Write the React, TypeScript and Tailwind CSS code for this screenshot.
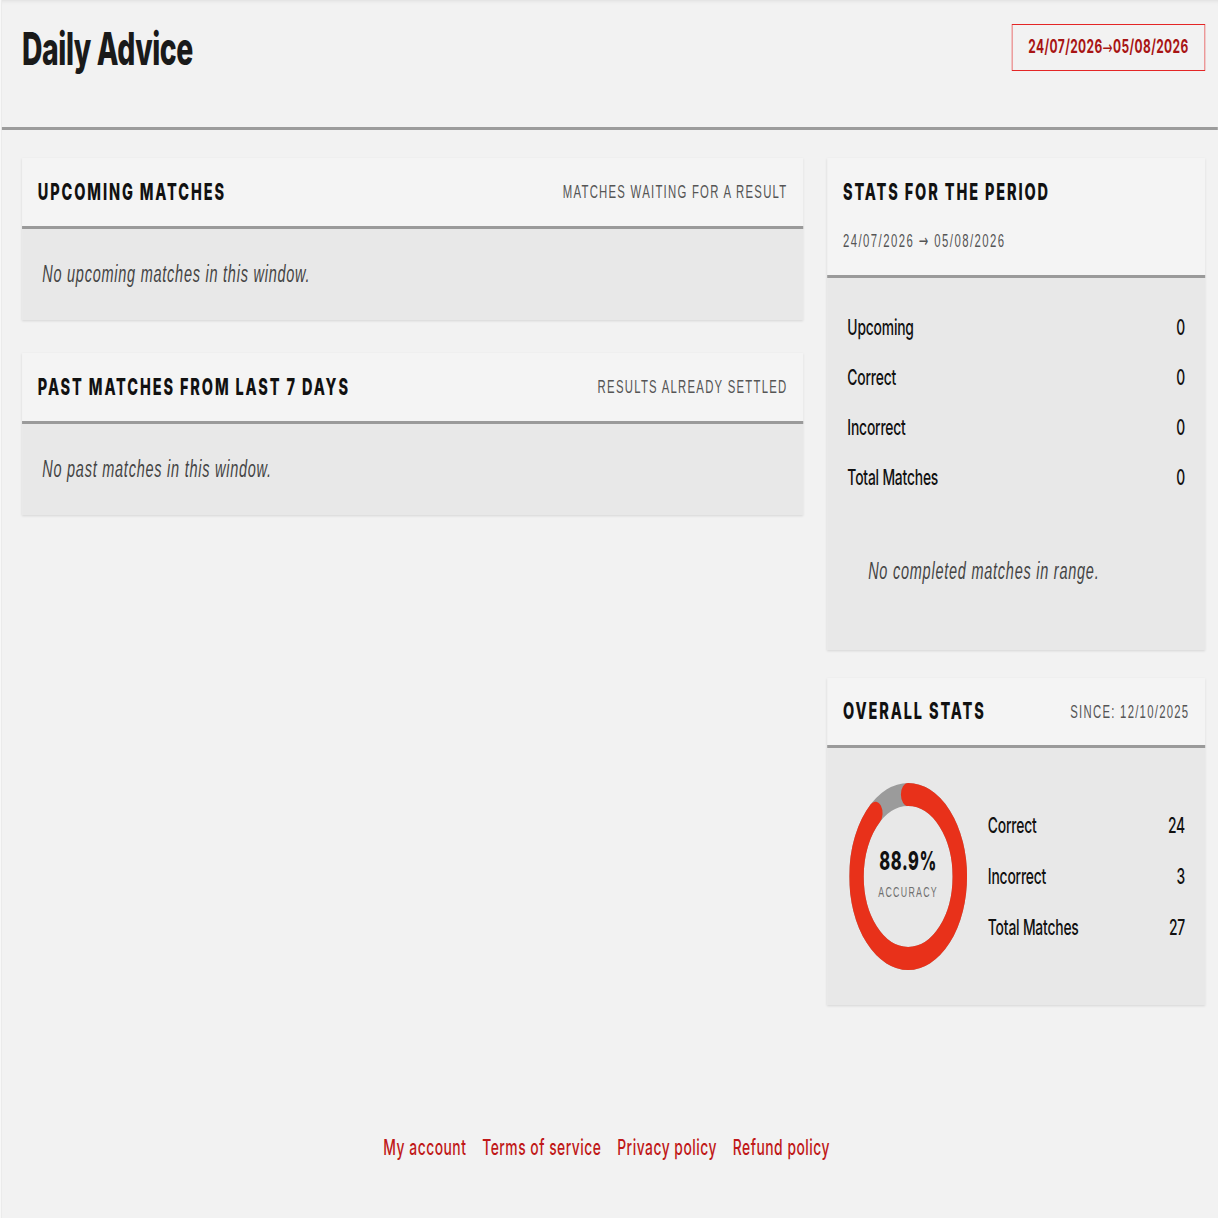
import React from "react"

const periodRows = [
  { label: "Upcoming", value: "0" },
  { label: "Correct", value: "0" },
  { label: "Incorrect", value: "0" },
  { label: "Total Matches", value: "0" },
]

const overallRows = [
  { label: "Correct", value: "24" },
  { label: "Incorrect", value: "3" },
  { label: "Total Matches", value: "27" },
]

const footerLinks = ["My account", "Terms of service", "Privacy policy", "Refund policy"]

function Arrow() {
  return <span className="font-['DejaVu_Sans',sans-serif] font-normal">→</span>
}

function AccuracyRing({ value }: { value: number }) {
  const r = 82
  const c = 2 * Math.PI * r
  return (
    <div className="relative h-[187px] w-[187px] shrink-0">
      <svg viewBox="0 0 187 187" className="h-full w-full">
        <circle cx="93.5" cy="93.5" r={r} fill="none" stroke="#9b9b9b" strokeWidth="23" />
        <circle
          cx="93.5"
          cy="93.5"
          r={r}
          fill="none"
          stroke="#e8311a"
          strokeWidth="23"
          strokeLinecap="round"
          strokeDasharray={`${(value / 100) * c} ${c}`}
          transform="rotate(-90 93.5 93.5)"
        />
      </svg>
      <div className="absolute inset-0 flex flex-col items-center justify-center pb-[6px]">
        <span className="font-['Inter',sans-serif] text-[26px] leading-none font-extrabold tracking-[1px] text-[#111]">{value}%</span>
        <span className="mt-[11px] text-[14px] leading-none tracking-[2px] text-[#6f6f6f]">ACCURACY</span>
      </div>
    </div>
  )
}

function CardTitle({ children }: { children: React.ReactNode }) {
  return (
    <h2 className="font-['Inter',sans-serif] text-[23px] leading-none font-extrabold tracking-[3px] text-[#111]">{children}</h2>
  )
}

function StatRow({ label, value, tall }: { label: string; value: string; tall?: boolean }) {
  return (
    <div
      className={`flex items-center justify-between font-['Inter',sans-serif] text-[22px] font-medium tracking-[-0.3px] text-[#111] ${
        tall ? "h-[51px]" : "h-[50px]"
      }`}
    >
      <span>{label}</span>
      <span>{value}</span>
    </div>
  )
}

export default function App() {
  return (
    <div className="min-h-screen w-full overflow-hidden bg-[#f2f2f2] font-['Liberation_Sans',Arial,sans-serif]">
      {/* the page is drawn wide and squeezed sideways, as in the capture */}
      <div className="flex min-h-[1218px] w-[1933px] origin-top-left scale-x-[0.63]">
        <aside className="w-[3px] shrink-0 border-r border-[#e4e4e4] bg-[#f8f8f8]" />

        <main className="flex-1">
          {/* Page header */}
          <header className="flex h-[130px] items-start justify-between border-b-[3px] border-[#9c9c9c] pt-[24px] pr-[20px] pl-[32px] shadow-[inset_0_7px_7px_-7px_rgba(0,0,0,0.12)]">
            <h1 className="mt-[2px] font-['Inter',sans-serif] text-[45px] leading-none font-extrabold tracking-[-0.7px] text-[#1a1a1a]">
              Daily Advice
            </h1>
            <div className="flex h-[47px] w-[307px] items-center justify-center border border-[#e42626] font-['Inter',sans-serif] text-[19px] font-bold tracking-[0.6px] text-[#a81414]">
              24/07/2026<Arrow />05/08/2026
            </div>
          </header>

          <div className="flex gap-[38px] pt-[28px] pr-[20px] pl-[32px]">
            {/* Matches */}
            <div className="flex flex-1 flex-col gap-[33px]">
              <section className="bg-[#f4f4f4] shadow-[0_1px_3px_rgba(0,0,0,0.12)]">
                <div className="flex h-[71px] items-center justify-between border-b-[3px] border-[#9a9a9a] px-[25px]">
                  <CardTitle>UPCOMING MATCHES</CardTitle>
                  <span className="text-[18px] leading-none tracking-[2px] text-[#555]">MATCHES WAITING FOR A RESULT</span>
                </div>
                <div className="flex h-[91px] items-center bg-[#e8e8e8] px-[32px]">
                  <p className="text-[23px] italic tracking-[1.2px] text-[#444]">No upcoming matches in this window.</p>
                </div>
              </section>

              <section className="bg-[#f4f4f4] shadow-[0_1px_3px_rgba(0,0,0,0.12)]">
                <div className="flex h-[71px] items-center justify-between border-b-[3px] border-[#9a9a9a] px-[25px]">
                  <CardTitle>PAST MATCHES FROM LAST 7 DAYS</CardTitle>
                  <span className="text-[18px] leading-none tracking-[2px] text-[#555]">RESULTS ALREADY SETTLED</span>
                </div>
                <div className="flex h-[91px] items-center bg-[#e8e8e8] px-[32px]">
                  <p className="text-[23px] italic tracking-[1.2px] text-[#444]">No past matches in this window.</p>
                </div>
              </section>
            </div>

            {/* Stats */}
            <div className="flex w-[600px] shrink-0 flex-col gap-[28px]">
              <section className="bg-[#f4f4f4] shadow-[0_1px_3px_rgba(0,0,0,0.12)]">
                <div className="border-b-[3px] border-[#9a9a9a] px-[25px] pt-[23px] pb-[25px]">
                  <CardTitle>STATS FOR THE PERIOD</CardTitle>
                  <p className="mt-[28px] text-[18px] leading-none tracking-[2.3px] text-[#555]">
                    24/07/2026 <Arrow /> 05/08/2026
                  </p>
                </div>
                <div className="h-[372px] bg-[#e8e8e8] px-[32px] pt-[24px]">
                  {periodRows.map((row) => (
                    <StatRow key={row.label} label={row.label} value={row.value} />
                  ))}
                  <p className="pt-[58px] pl-[33px] text-[23px] leading-none italic tracking-[1.2px] text-[#444]">
                    No completed matches in range.
                  </p>
                </div>
              </section>

              <section className="bg-[#f4f4f4] shadow-[0_1px_3px_rgba(0,0,0,0.12)]">
                <div className="flex h-[70px] items-center justify-between border-b-[3px] border-[#9a9a9a] px-[25px]">
                  <CardTitle>OVERALL STATS</CardTitle>
                  <span className="text-[18px] leading-none tracking-[2px] text-[#555]">SINCE: 12/10/2025</span>
                </div>
                <div className="flex h-[257px] items-center gap-[33px] bg-[#e8e8e8] pr-[32px] pl-[35px]">
                  <AccuracyRing value={88.9} />
                  <div className="flex-1">
                    {overallRows.map((row) => (
                      <StatRow key={row.label} label={row.label} value={row.value} tall />
                    ))}
                  </div>
                </div>
              </section>
            </div>
          </div>

          <footer className="mt-[131px] flex justify-center gap-[25px] pr-[42px] pl-[32px]">
            {footerLinks.map((link) => (
              <a key={link} href="#" className="font-['Inter',sans-serif] text-[22px] leading-none font-medium tracking-[0.8px] text-[#c01818]">
                {link}
              </a>
            ))}
          </footer>
        </main>
      </div>
    </div>
  )
}
